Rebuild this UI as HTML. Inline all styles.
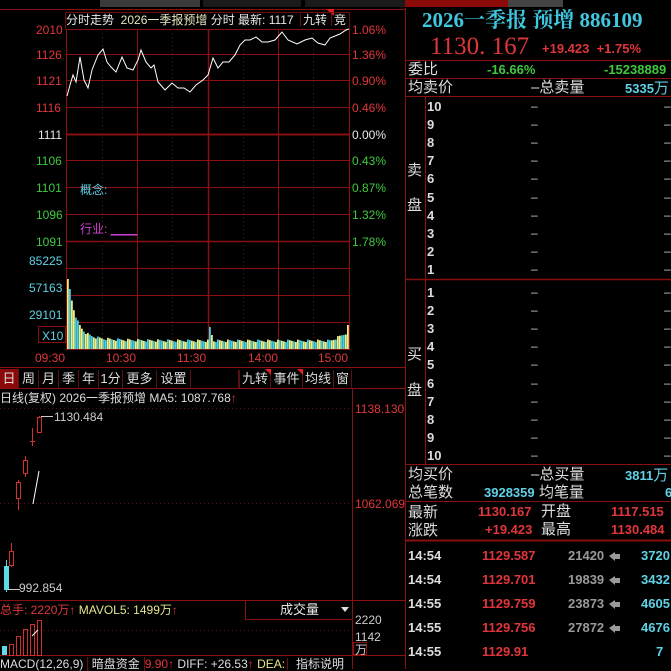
<!DOCTYPE html>
<html><head><meta charset="utf-8"><style>
*{margin:0;padding:0;box-sizing:border-box}
body{width:671px;height:669px;background:#000;overflow:hidden;position:relative;font-family:"Liberation Sans","Noto Sans CJK SC",sans-serif;font-size:12px;color:#ccc}
.a{position:absolute;white-space:nowrap;line-height:1}
.r{color:#e0363b}.g{color:#3fc83f}.w{color:#e8e8e8}.c{color:#5fd2e6}.y{color:#e6e68a}
.tab{position:absolute;top:370px;height:18px;border-right:1px solid #5a1010;color:#ddd;font-size:13px;line-height:18px;text-align:center}
.ob{position:absolute;left:427px;font-size:13px;color:#ddd;font-weight:bold;line-height:1}
.dash{position:absolute;font-size:12px;color:#ccc;line-height:1}
.rt{position:absolute;left:408px;font-size:15px;color:#ddd;line-height:1}
</style></head><body>
<div class="a" style="left:100px;top:0;width:100px;height:7px;background:#3a3a3a"></div>
<div class="a" style="left:203px;top:0;width:98px;height:7px;background:#1a1a1a"></div>
<div class="a" style="left:305px;top:0;width:100px;height:7px;background:#1a1a1a"></div>
<div class="a" style="left:405px;top:0;width:105px;height:7px;background:#8a0a0a"></div>
<div class="a" style="left:508px;top:0;width:55px;height:7px;background:#444"></div>

<svg class="a" style="left:0;top:0" width="671" height="669">
 <g stroke="#8a1010" stroke-width="1" fill="none">
  <line x1="405.5" y1="8" x2="405.5" y2="669"/>
  <line x1="0" y1="9.5" x2="405" y2="9.5"/>
  <line x1="66.5" y1="29" x2="66.5" y2="349"/>
  <line x1="137.5" y1="29" x2="137.5" y2="349"/>
  <line x1="208.5" y1="29" x2="208.5" y2="349" stroke-width="1.5"/>
  <line x1="278.5" y1="29" x2="278.5" y2="349"/>
  <line x1="349.5" y1="29" x2="349.5" y2="349"/>
  <line x1="66" y1="29.5" x2="350" y2="29.5"/>
  <line x1="66" y1="54.5" x2="350" y2="54.5"/>
  <line x1="66" y1="80.5" x2="350" y2="80.5"/>
  <line x1="66" y1="107.5" x2="350" y2="107.5"/>
  <line x1="66" y1="134.5" x2="350" y2="134.5" stroke-width="2"/>
  <line x1="66" y1="160.5" x2="350" y2="160.5"/>
  <line x1="66" y1="187.5" x2="350" y2="187.5"/>
  <line x1="66" y1="214.5" x2="350" y2="214.5"/>
  <line x1="66" y1="241.5" x2="350" y2="241.5" stroke-width="1.5"/>
  <line x1="66" y1="268.5" x2="350" y2="268.5"/>
  <line x1="66" y1="295.5" x2="350" y2="295.5"/>
  <line x1="66" y1="322.5" x2="350" y2="322.5"/>
  <line x1="66" y1="349.5" x2="350" y2="349.5"/>
  <line x1="0" y1="367.5" x2="405" y2="367.5"/>
  <line x1="0" y1="388.5" x2="405" y2="388.5"/>
  <line x1="352.5" y1="388" x2="352.5" y2="669"/>
  <line x1="0" y1="600.5" x2="405" y2="600.5"/>
  <line x1="0" y1="655.5" x2="405" y2="655.5"/>
  <line x1="245.5" y1="600" x2="245.5" y2="619"/>
  <line x1="245" y1="619.5" x2="352" y2="619.5"/>
  <rect x="38.5" y="326.5" width="27" height="16"/>
  <rect x="353.5" y="642.5" width="13" height="12"/>
  <line x1="405" y1="60.5" x2="671" y2="60.5"/>
  <line x1="405" y1="78.5" x2="671" y2="78.5"/>
  <line x1="405" y1="96.5" x2="671" y2="96.5"/>
  <line x1="425.5" y1="96" x2="425.5" y2="464"/>
  <line x1="405" y1="279.5" x2="671" y2="279.5" stroke-width="1.5"/>
  <line x1="405" y1="464.5" x2="671" y2="464.5"/>
  <line x1="405" y1="501.5" x2="671" y2="501.5"/>
  <line x1="405" y1="540.5" x2="671" y2="540.5" stroke-width="2"/>
 </g>
 <g stroke="#5a1010" stroke-dasharray="1,3">
  <line x1="102.5" y1="29" x2="102.5" y2="349"/>
  <line x1="172.5" y1="29" x2="172.5" y2="349"/>
  <line x1="243.5" y1="29" x2="243.5" y2="349"/>
  <line x1="313.5" y1="29" x2="313.5" y2="349"/>
  <line x1="0" y1="408.5" x2="352" y2="408.5"/>
  <line x1="0" y1="503.5" x2="352" y2="503.5"/>
  <line x1="0" y1="630.5" x2="352" y2="630.5"/>
 </g>
 <polyline fill="none" stroke="#fff" stroke-width="1" points="67,96 70,85 73,75 76,82 80,57 84,80 88,88 92,70 98,55 103,49 107,62 111,67 116,72 122,57 127,68 133,70 138,60 141,50 146,62 151,68 154,65 158,82 165,90 172,83 178,88 184,88 190,92 196,85 203,80 208,75 213,58 218,68 223,62 229,62 235,55 240,45 245,40 250,40 256,37 262,42 268,42 275,40 282,32 288,40 297,44 305,40 312,38 318,43 325,45 330,38 340,34 346,30 349,29"/>
 <g id="vol"></g>
 <polygon points="326,9 334,9 334,16" fill="#e02020"/>
 <rect x="4" y="566" width="5" height="24" fill="#5fd8e8"/>
 <line x1="6.5" y1="560" x2="6.5" y2="592" stroke="#5fd8e8"/>
 <line x1="8" y1="589.5" x2="20" y2="589.5" stroke="#ccc"/>
 <line x1="11.5" y1="543" x2="11.5" y2="567" stroke="#d03030"/>
 <rect x="9.5" y="551.5" width="4" height="14" fill="#000" stroke="#d03030"/>
 <line x1="18.5" y1="480" x2="18.5" y2="510" stroke="#d03030"/>
 <rect x="16.5" y="482.5" width="4" height="16" fill="#000" stroke="#d03030"/>
 <line x1="25.5" y1="456" x2="25.5" y2="477" stroke="#d03030"/>
 <rect x="23.5" y="460.5" width="4" height="13" fill="#000" stroke="#d03030"/>
 <line x1="32.5" y1="428" x2="32.5" y2="446" stroke="#d03030"/>
 <line x1="30" y1="441.5" x2="35" y2="441.5" stroke="#d03030"/>
 <line x1="39.5" y1="416" x2="39.5" y2="433" stroke="#d03030"/>
 <rect x="37.5" y="417.5" width="4" height="15" fill="#000" stroke="#d03030"/>
 <line x1="41" y1="416.5" x2="53" y2="416.5" stroke="#ccc"/>
 <line x1="33" y1="504" x2="39" y2="471" stroke="#fff"/>
 <rect x="2" y="646" width="5" height="9" fill="#5fd8e8"/>
 <g fill="none" stroke="#d03030">
  <rect x="9.5" y="644.5" width="4" height="11"/>
  <rect x="16.5" y="636.5" width="4" height="19"/>
  <rect x="23.5" y="629.5" width="4" height="26"/>
  <rect x="30.5" y="624.5" width="4" height="31"/>
  <rect x="37.5" y="620.5" width="4" height="35"/>
 </g>
 <line x1="32" y1="636" x2="38" y2="630" stroke="#fff"/>
 <polygon points="341,607 349,607 345,612" fill="#ddd"/>
 <g fill="#999">
 <polygon points="609,556 615,552 615,554 620,554 620,559 615,559 615,561"/>
 <polygon points="609,580 615,576 615,578 620,578 620,583 615,583 615,585"/>
 <polygon points="609,604 615,600 615,602 620,602 620,607 615,607 615,609"/>
 <polygon points="609,628 615,624 615,626 620,626 620,631 615,631 615,633"/>
 </g>
</svg>
<script>
(function(){var g=document.getElementById('vol'),s='';
for(var x=67;x<349;x+=2){var t=x-67,h;
h=7+62*Math.exp(-t/7)+6*Math.exp(-t/30)+((x*7)%5)*0.6;
if(x==67)h=70;if(x==69)h=60;
if(x==209)h=22;if(x==211)h=14;
if(x>330)h+= (x-330)*0.5;if(x>=347)h=24;
var c=((x*13)%7)<3?'#40d0f0':'#f0f080';
s+='<rect x="'+x+'" y="'+(349-h)+'" width="1.8" height="'+h+'" fill="'+c+'"/>';}
g.innerHTML=s;})();
</script>

<div class="a" style="left:65px;top:12px;width:285px;height:17px;border:1px solid #6a1010;border-bottom:none"></div>
<div class="a w" style="left:66px;top:14px;font-size:12px">分时走势&nbsp;&nbsp;<span style="color:#e6e6c0">2026一季报预增</span> 分时 最新: 1117</div>
<div class="a w" style="left:300px;top:14px;font-size:12px;border-left:1px solid #6a1010;padding-left:2px">九转</div>
<div class="a w" style="left:331px;top:14px;font-size:12px;border-left:1px solid #6a1010;padding-left:2px">竞</div>
<div class="a r" style="left:36px;top:24px">2010</div>
<div class="a r" style="left:36px;top:49px">1126</div>
<div class="a r" style="left:36px;top:75px">1121</div>
<div class="a r" style="left:36px;top:102px">1116</div>
<div class="a w" style="left:38px;top:129px">1111</div>
<div class="a g" style="left:36px;top:155px">1106</div>
<div class="a g" style="left:36px;top:182px">1101</div>
<div class="a g" style="left:36px;top:209px">1096</div>
<div class="a g" style="left:36px;top:236px">1091</div>
<div class="a r" style="left:352px;top:24px">1.06%</div>
<div class="a r" style="left:352px;top:49px">1.36%</div>
<div class="a r" style="left:352px;top:75px">0.90%</div>
<div class="a r" style="left:352px;top:102px">0.46%</div>
<div class="a w" style="left:352px;top:129px">0.00%</div>
<div class="a g" style="left:352px;top:155px">0.43%</div>
<div class="a g" style="left:352px;top:182px">0.87%</div>
<div class="a g" style="left:352px;top:209px">1.32%</div>
<div class="a g" style="left:352px;top:236px">1.78%</div>
<div class="a c" style="left:80px;top:184px">概念:</div>
<div class="a" style="left:80px;top:223px;color:#d040d0">行业: <span style="text-decoration:underline">____</span></div>
<div class="a c" style="left:29px;top:255px">85225</div>
<div class="a c" style="left:29px;top:282px">57163</div>
<div class="a c" style="left:29px;top:309px">29101</div>
<div class="a c" style="left:42px;top:330px">X10</div>
<div class="a r" style="left:35px;top:352px">09:30</div>
<div class="a r" style="left:106px;top:352px">10:30</div>
<div class="a r" style="left:177px;top:352px">11:30</div>
<div class="a r" style="left:248px;top:352px">14:00</div>
<div class="a r" style="left:318px;top:352px">15:00</div>

<div class="a" style="left:0;top:369px;width:19px;height:19px;background:#8a0a0a"></div>
<div class="tab" style="left:0;width:19px">日</div>
<div class="tab" style="left:19px;width:20px">周</div>
<div class="tab" style="left:39px;width:20px">月</div>
<div class="tab" style="left:59px;width:20px">季</div>
<div class="tab" style="left:79px;width:20px">年</div>
<div class="tab" style="left:99px;width:24px">1分</div>
<div class="tab" style="left:123px;width:34px">更多</div>
<div class="tab" style="left:157px;width:34px">设置</div>
<div class="tab" style="left:191px;width:48px"></div>
<div class="tab" style="left:239px;width:32px;border-left:1px solid #5a1010">九转</div>
<div class="tab" style="left:271px;width:32px">事件</div>
<div class="tab" style="left:303px;width:31px">均线</div>
<div class="tab" style="left:334px;width:18px">窗</div>
<svg class="a" style="left:0;top:368px" width="352" height="8"><polygon points="265,1 271,1 271,7" fill="#e02020"/><polygon points="297,1 303,1 303,7" fill="#e02020"/></svg>

<div class="a w" style="left:0;top:392px;font-size:12px;color:#ddd">日线(复权) 2026一季报预增 MA5: 1087.768<span class="r">↑</span></div>
<div class="a r" style="left:355px;top:403px;font-size:12px">1138.130</div>
<div class="a r" style="left:355px;top:498px;font-size:12px">1062.069</div>
<div class="a" style="left:54px;top:411px;color:#ccc">1130.484</div>
<div class="a" style="left:19px;top:582px;color:#ccc">992.854</div>
<div class="a r" style="left:0;top:604px">总手: 2220万↑ <span class="y">MAVOL5: 1499万</span>↑</div>
<div class="a w" style="left:280px;top:603px;font-size:13px">成交量</div>
<div class="a w" style="left:355px;top:614px;color:#ccc">2220</div>
<div class="a w" style="left:355px;top:631px;color:#ccc">1142</div>
<div class="a w" style="left:355px;top:644px;color:#ccc">万</div>
<div class="a w" style="left:0;top:658px;color:#ddd">MACD(12,26,9) <span style="border-left:1px solid #6a1010;border-right:1px solid #6a1010;padding:0 4px">暗盘资金</span><span class="r">9.90↑</span> DIFF: +26.53<span class="r">↑</span> <span class="y">DEA:</span></div>
<div class="a w" style="left:287px;top:658px;color:#ddd;border-left:1px solid #6a1010;padding-left:8px">指标说明</div>

<div class="a c" style="left:422px;top:10px;font-size:21px;font-weight:bold;font-family:'Liberation Serif','Noto Serif CJK SC',serif;color:#40c8e0">2026一季报 预增 886109</div>
<div class="a r" style="left:430px;top:34px;font-size:25px;font-family:'Liberation Serif',serif">1130. 167</div>
<div class="a r" style="left:542px;top:42px;font-size:13px;font-weight:bold">+19.423&nbsp;&nbsp;+1.75%</div>
<div class="rt" style="top:62px">委比</div>
<div class="a g" style="left:487px;top:63px;font-size:13px;font-weight:bold">-16.66%</div>
<div class="a g" style="left:604px;top:63px;font-size:13px;font-weight:bold">-15238889</div>
<div class="rt" style="top:80px">均卖价</div>
<div class="a w" style="left:531px;top:80px;font-size:15px;color:#ddd">–总卖量</div>
<div class="a c" style="left:625px;top:81px;font-size:13px;font-weight:bold">5335<span style="font-size:15px;font-weight:normal">万</span></div>
<div class="a w" style="left:407px;top:163px;font-size:15px;color:#ddd">卖</div>
<div class="a w" style="left:407px;top:198px;font-size:15px;color:#ddd">盘</div>
<div class="a w" style="left:407px;top:347px;font-size:15px;color:#ddd">买</div>
<div class="a w" style="left:407px;top:383px;font-size:15px;color:#ddd">盘</div>
<div id="ob"></div>
<script>
(function(){var s='';
for(var i=0;i<10;i++){var y=100+i*18.1;s+='<div class="ob" style="top:'+y+'px">'+(10-i)+'</div><div class="dash" style="left:531px;top:'+y+'px">–</div><div class="dash" style="left:664px;top:'+y+'px">–</div>';}
for(var i=0;i<10;i++){var y=286+i*18.1;s+='<div class="ob" style="top:'+y+'px">'+(i+1)+'</div><div class="dash" style="left:531px;top:'+y+'px">–</div><div class="dash" style="left:664px;top:'+y+'px">–</div>';}
document.getElementById('ob').innerHTML=s;})();
</script>
<div class="rt" style="top:467px">均买价</div>
<div class="a" style="left:531px;top:467px;font-size:15px;color:#ddd">–总买量</div>
<div class="a c" style="left:625px;top:468px;font-size:13px;font-weight:bold">3811<span style="font-size:15px;font-weight:normal">万</span></div>
<div class="rt" style="top:485px">总笔数</div>
<div class="a c" style="left:484px;top:486px;font-size:13px;font-weight:bold">3928359</div>
<div class="a" style="left:539px;top:485px;font-size:15px;color:#ddd">均笔量</div>
<div class="a c" style="left:665px;top:486px;font-size:13px;font-weight:bold">6</div>
<div class="rt" style="top:505px">最新</div>
<div class="a r" style="left:478px;top:505px;font-size:13px;font-weight:bold">1130.167</div>
<div class="a" style="left:541px;top:504px;font-size:15px;color:#ddd">开盘</div>
<div class="a r" style="left:611px;top:505px;font-size:13px;font-weight:bold">1117.515</div>
<div class="rt" style="top:523px">涨跌</div>
<div class="a r" style="left:485px;top:523px;font-size:13px;font-weight:bold">+19.423</div>
<div class="a" style="left:541px;top:522px;font-size:15px;color:#ddd">最高</div>
<div class="a r" style="left:611px;top:523px;font-size:13px;font-weight:bold">1130.484</div>

<div class="a" style="left:408px;top:549px;font-size:13px;font-weight:bold;color:#ddd">14:54</div>
<div class="a r" style="left:482px;top:549px;font-size:13px;font-weight:bold">1129.587</div>
<div class="a" style="left:568px;top:549px;font-size:13px;font-weight:bold;color:#999">21420</div>
<div class="a c" style="left:641px;top:549px;font-size:13px;font-weight:bold">3720</div>
<div class="a" style="left:408px;top:573px;font-size:13px;font-weight:bold;color:#ddd">14:54</div>
<div class="a r" style="left:482px;top:573px;font-size:13px;font-weight:bold">1129.701</div>
<div class="a" style="left:568px;top:573px;font-size:13px;font-weight:bold;color:#999">19839</div>
<div class="a c" style="left:641px;top:573px;font-size:13px;font-weight:bold">3432</div>
<div class="a" style="left:408px;top:597px;font-size:13px;font-weight:bold;color:#ddd">14:55</div>
<div class="a r" style="left:482px;top:597px;font-size:13px;font-weight:bold">1129.759</div>
<div class="a" style="left:568px;top:597px;font-size:13px;font-weight:bold;color:#999">23873</div>
<div class="a c" style="left:641px;top:597px;font-size:13px;font-weight:bold">4605</div>
<div class="a" style="left:408px;top:621px;font-size:13px;font-weight:bold;color:#ddd">14:55</div>
<div class="a r" style="left:482px;top:621px;font-size:13px;font-weight:bold">1129.756</div>
<div class="a" style="left:568px;top:621px;font-size:13px;font-weight:bold;color:#999">27872</div>
<div class="a c" style="left:641px;top:621px;font-size:13px;font-weight:bold">4676</div>
<div class="a" style="left:408px;top:645px;font-size:13px;font-weight:bold;color:#ddd">14:55</div>
<div class="a r" style="left:482px;top:645px;font-size:13px;font-weight:bold">1129.91</div>
<div class="a c" style="left:656px;top:645px;font-size:13px;font-weight:bold">7</div>
</body></html>
